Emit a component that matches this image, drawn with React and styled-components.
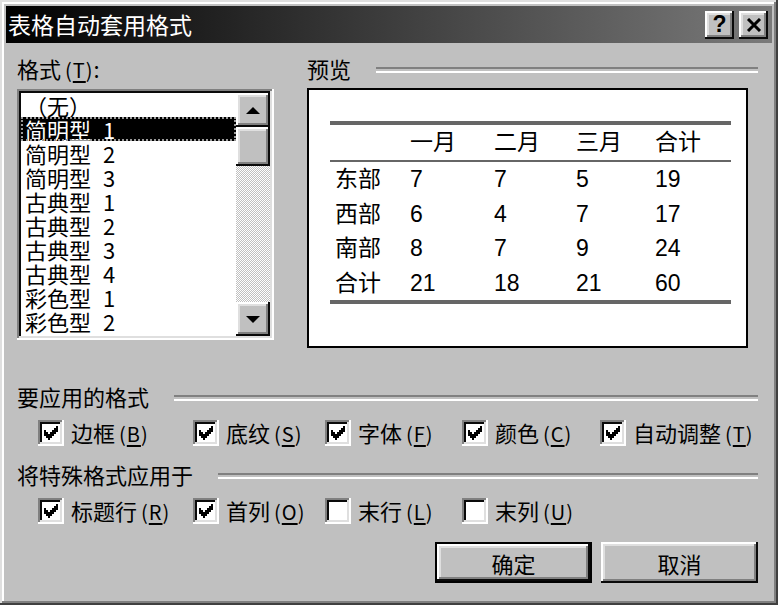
import React from 'react'
import styled, { createGlobalStyle } from 'styled-components'

const GlobalStyle = createGlobalStyle`
  html, body {
    margin: 0;
    padding: 0;
    background: #c0c0c0;
  }
  body {
    font-family: "Noto Sans CJK SC", "Liberation Sans", sans-serif;
    color: #000;
  }
`;

const raised = `
  box-shadow: inset -2px -2px 0 #0a0a0a, inset 2px 2px 0 #fff,
    inset -4px -4px 0 #808080, inset 4px 4px 0 #dfdfdf;
`;

const sunken = `
  box-shadow: inset -2px -2px 0 #fff, inset 2px 2px 0 #808080,
    inset -4px -4px 0 #dfdfdf, inset 4px 4px 0 #0a0a0a;
`;

const Window = styled.div`
  width: 778px;
  height: 605px;
  box-sizing: border-box;
  padding: 6px;
  background: #c0c0c0;
  box-shadow: inset -2px -2px 0 #404040, inset 2px 2px 0 #dfdfdf,
    inset -4px -4px 0 #808080, inset 4px 4px 0 #fff;
  display: flex;
  flex-direction: column;
`;

const TitleBar = styled.div`
  height: 37px;
  flex-shrink: 0;
  display: flex;
  align-items: center;
  padding: 0 4px 0 2px;
  background: linear-gradient(to right, #000 0%, #7a7a7a 100%);
`;

const TitleText = styled.div`
  flex: 1;
  color: #fff;
  font-size: 23px;
  line-height: 37px;
`;

const CaptionButtons = styled.div`
  display: flex;
  gap: 5px;
`;

const CaptionButton = styled.div`
  width: 29px;
  height: 28px;
  background: #c0c0c0;
  ${raised}
  display: flex;
  align-items: center;
  justify-content: center;
  font-family: "Liberation Sans", sans-serif;
  font-weight: bold;
  font-size: 23px;
  line-height: 1;
`;

const Body = styled.div`
  flex: 1;
  display: flex;
  flex-direction: column;
  padding: 13px 14px 0 11px;
`;

const TopRow = styled.div`
  display: flex;
  gap: 33px;
`;

const FormatColumn = styled.div`
  width: 257px;
  display: flex;
  flex-direction: column;
`;

const PreviewColumn = styled.div`
  flex: 1;
  display: flex;
  flex-direction: column;
`;

const Label = styled.div`
  font-size: 22px;
  line-height: 24px;
  height: 24px;
  white-space: nowrap;
`;

const Heading = styled.div`
  display: flex;
  align-items: center;
  gap: 25px;
  font-size: 22px;
  line-height: 24px;
  height: 24px;
  white-space: nowrap;
`;

const Groove = styled.div`
  flex: 1;
  height: 2px;
  margin-top: 4px;
  border-top: 2px solid #808080;
  border-bottom: 2px solid #fff;
`;

const Mn = styled.span`
  font-size: 20px;
  margin-left: 4px;
  letter-spacing: 1px;
  u {
    text-underline-offset: 3px;
  }
`;

const ListBox = styled.div`
  margin-top: 9px;
  height: 251px;
  box-sizing: border-box;
  padding: 4px;
  background: #fff;
  ${sunken}
  display: flex;
`;

const ListItems = styled.div`
  flex: 1;
  display: flex;
  flex-direction: column;
  overflow: hidden;
`;

const ListItem = styled.div`
  height: 24px;
  flex-shrink: 0;
  display: flex;
  align-items: center;
  padding-left: 4px;
  font-size: 22px;
  line-height: 24px;
  white-space: nowrap;
  background: ${(p) => (p.selected ? '#000' : 'transparent')};
  color: ${(p) => (p.selected ? '#fff' : '#000')};
  outline: ${(p) => (p.selected ? '2px dotted #9a9a9a' : 'none')};
  outline-offset: -2px;
`;

const ItemNum = styled.span`
  margin-left: 12px;
`;

const ScrollBar = styled.div`
  width: 34px;
  display: flex;
  flex-direction: column;
`;

const ScrollButton = styled.div`
  height: ${(p) => p.h || 34}px;
  flex-shrink: 0;
  background: #c0c0c0;
  ${raised}
  display: flex;
  align-items: center;
  justify-content: center;
`;

const ScrollTrack = styled.div`
  flex: 1;
  background: repeating-conic-gradient(#c0c0c0 0 25%, #fff 0 50%) 0 0 / 2px 2px;
`;

const PreviewBox = styled.div`
  margin-top: 8px;
  width: 441px;
  height: 260px;
  box-sizing: border-box;
  border: 2px solid #000;
  background: #fff;
  padding: 31px 15px 0 21px;
`;

const TableGrid = styled.div`
  display: grid;
  grid-template-columns: 80px 84px 82px 79px 1fr;
  border-top: 4px solid #666;
  border-bottom: 4px solid #666;
  font-family: "Liberation Sans", "Noto Sans CJK SC", sans-serif;
  font-size: 23px;
`;

const HeadCell = styled.div`
  height: 35px;
  line-height: 35px;
  border-bottom: 2px solid #666;
  padding-left: ${(p) => (p.first ? 5 : 0)}px;
`;

const Cell = styled.div`
  height: 34.5px;
  line-height: 34.5px;
  padding-left: ${(p) => (p.first ? 5 : 0)}px;
`;

const Section = styled.div`
  margin-top: ${(p) => p.top}px;
  display: flex;
  flex-direction: column;
`;

const CheckGrid = styled.div`
  margin-top: 12px;
  padding-left: 21px;
  display: grid;
  grid-template-columns: 155px 132px 137px 138px auto;
`;

const CheckItem = styled.div`
  display: flex;
  align-items: center;
  gap: 7px;
  height: 26px;
  font-size: 22px;
  line-height: 26px;
  white-space: nowrap;
`;

const Box = styled.div`
  width: 26px;
  height: 26px;
  flex-shrink: 0;
  box-sizing: border-box;
  background: #fff;
  ${sunken}
  display: flex;
  align-items: center;
  justify-content: center;
`;

const ButtonRow = styled.div`
  margin-top: 18px;
  display: flex;
  justify-content: flex-end;
  gap: 9px;
`;

const PushButton = styled.div`
  width: 157px;
  height: 41px;
  box-sizing: border-box;
  border: ${(p) => (p.primary ? '2px solid #000' : 'none')};
  background: #c0c0c0;
  ${raised}
  display: flex;
  align-items: center;
  justify-content: center;
  font-size: 22px;
`;

const CHECK = [
  [6, 0], [5, 1], [6, 1], [0, 2], [4, 2], [5, 2], [6, 2],
  [0, 3], [1, 3], [3, 3], [4, 3], [5, 3], [0, 4], [1, 4],
  [2, 4], [3, 4], [4, 4], [1, 5], [2, 5], [3, 5], [2, 6],
];

const CheckMark = () => (
  <svg width="14" height="14" viewBox="0 0 7 7" shapeRendering="crispEdges">
    {CHECK.map(([x, y]) => (
      <rect key={`${x}-${y}`} x={x} y={y} width="1" height="1" fill="#000" />
    ))}
  </svg>
);

const Arrow = ({ down }) => (
  <svg width="14" height="7" viewBox="0 0 14 7">
    <polygon points={down ? '0,0 14,0 7,7' : '7,0 14,7 0,7'} fill="#000" />
  </svg>
);

const CheckBox = ({ checked, label, mn }) => (
  <CheckItem>
    <Box>{checked && <CheckMark />}</Box>
    <span>
      {label}
      <Mn>(<u>{mn}</u>)</Mn>
    </span>
  </CheckItem>
);

const styles = [
  ['（无）'],
  ['简明型', '1'],
  ['简明型', '2'],
  ['简明型', '3'],
  ['古典型', '1'],
  ['古典型', '2'],
  ['古典型', '3'],
  ['古典型', '4'],
  ['彩色型', '1'],
  ['彩色型', '2'],
];

const header = ['', '一月', '二月', '三月', '合计'];
const rows = [
  ['东部', '7', '7', '5', '19'],
  ['西部', '6', '4', '7', '17'],
  ['南部', '8', '7', '9', '24'],
  ['合计', '21', '18', '21', '60'],
];

const App = () => {
  return (
    <Window>
      <GlobalStyle />
      <TitleBar>
        <TitleText>表格自动套用格式</TitleText>
        <CaptionButtons>
          <CaptionButton>?</CaptionButton>
          <CaptionButton>
            <svg width="16" height="14" viewBox="0 0 16 14">
              <path d="M2 1 L14 13 M14 1 L2 13" stroke="#000" strokeWidth="3" />
            </svg>
          </CaptionButton>
        </CaptionButtons>
      </TitleBar>
      <Body>
        <TopRow>
          <FormatColumn>
            <Label>
              格式<Mn>(<u>T</u>)</Mn>:
            </Label>
            <ListBox>
              <ListItems>
                {styles.map(([name, num], i) => (
                  <ListItem key={i} selected={i === 1}>
                    {name}
                    {num && <ItemNum>{num}</ItemNum>}
                  </ListItem>
                ))}
              </ListItems>
              <ScrollBar>
                <ScrollButton>
                  <Arrow />
                </ScrollButton>
                <ScrollButton h={39} />
                <ScrollTrack />
                <ScrollButton>
                  <Arrow down />
                </ScrollButton>
              </ScrollBar>
            </ListBox>
          </FormatColumn>
          <PreviewColumn>
            <Heading>
              预览
              <Groove />
            </Heading>
            <PreviewBox>
              <TableGrid>
                {header.map((h, i) => (
                  <HeadCell key={i} first={i === 0}>
                    {h}
                  </HeadCell>
                ))}
                {rows.map((r) =>
                  r.map((c, i) => (
                    <Cell key={r[0] + i} first={i === 0}>
                      {c}
                    </Cell>
                  ))
                )}
              </TableGrid>
            </PreviewBox>
          </PreviewColumn>
        </TopRow>

        <Section top={36}>
          <Heading>
            要应用的格式
            <Groove />
          </Heading>
          <CheckGrid>
            <CheckBox checked label="边框" mn="B" />
            <CheckBox checked label="底纹" mn="S" />
            <CheckBox checked label="字体" mn="F" />
            <CheckBox checked label="颜色" mn="C" />
            <CheckBox checked label="自动调整" mn="T" />
          </CheckGrid>
        </Section>

        <Section top={16}>
          <Heading>
            将特殊格式应用于
            <Groove />
          </Heading>
          <CheckGrid>
            <CheckBox checked label="标题行" mn="R" />
            <CheckBox checked label="首列" mn="O" />
            <CheckBox label="末行" mn="L" />
            <CheckBox label="末列" mn="U" />
          </CheckGrid>
        </Section>

        <ButtonRow>
          <PushButton primary>确定</PushButton>
          <PushButton>取消</PushButton>
        </ButtonRow>
      </Body>
    </Window>
  )
}

export default App
